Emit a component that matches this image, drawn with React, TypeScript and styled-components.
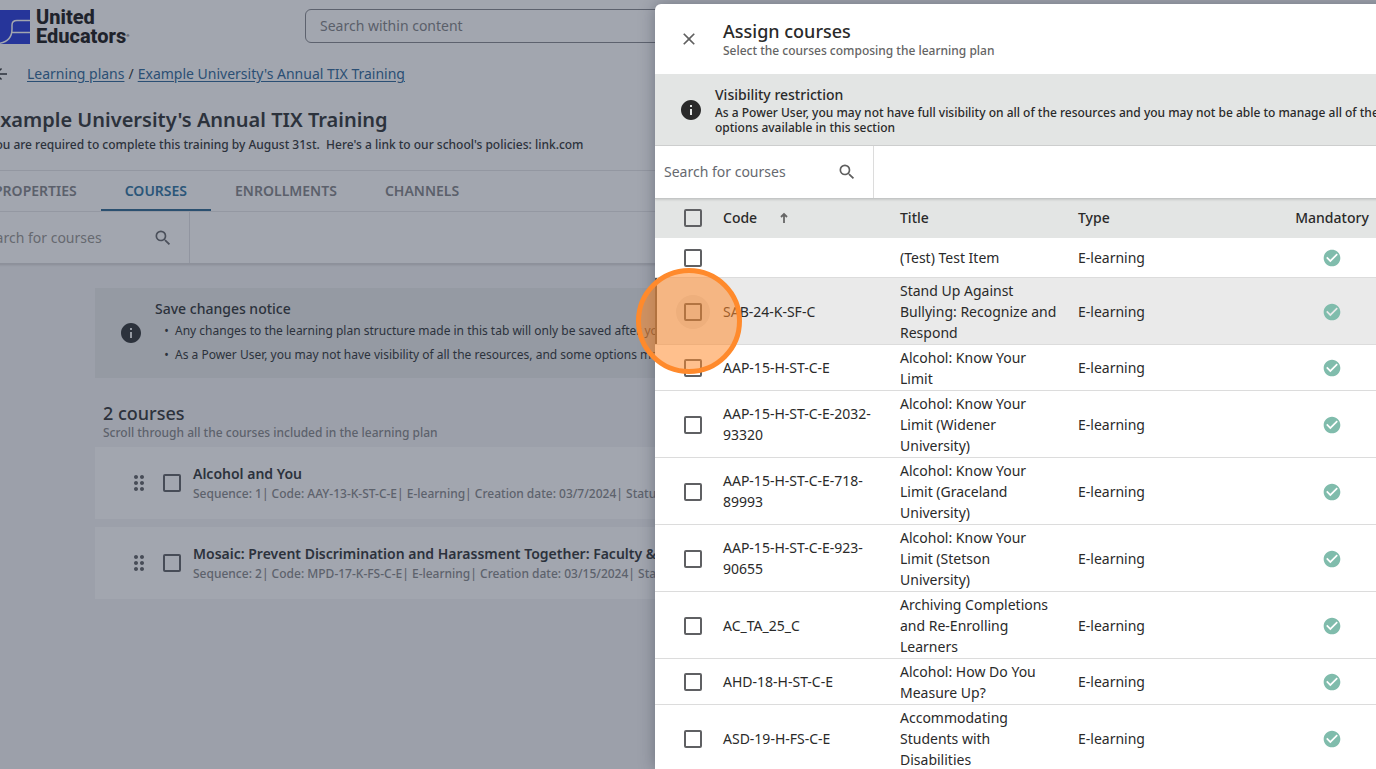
import React from "react";
import styled, { createGlobalStyle } from "styled-components";
import {
  MdSearch,
  MdInfo,
  MdClose,
  MdArrowBack,
  MdCheckCircle,
  MdDragIndicator,
} from "react-icons/md";

const Global = createGlobalStyle`
  * { box-sizing: border-box; }
  html, body, #root { height: 100%; }
  body {
    margin: 0;
    overflow: hidden;
    background: #9ca0aa;
    color: #333;
    font-family: "Noto Sans", "Open Sans", sans-serif;
    font-size: 14px;
    line-height: 21px;
  }
  h1, h2, h3, p, ul { margin: 0; padding: 0; }
  input, button { font: inherit; color: inherit; }
  button { background: none; border: 0; padding: 0; }
`;

const Stage = styled.div`
  position: relative;
  min-height: 100vh;
  overflow: hidden;
`;

const Shell = styled.div`
  margin-left: -28px;
  color: #2c323c;
`;

const Top = styled.header`
  background: #a2a6af;
`;

const Brandbar = styled.div`
  display: flex;
  align-items: center;
  height: 52px;
  padding-left: 18px;
`;

const Brand = styled.div`
  display: flex;
  align-items: center;
  gap: 6px;
  width: 315px;
  padding-top: 2px;
`;

const BrandName = styled.div`
  font-family: Roboto, sans-serif;
  font-weight: 800;
  font-size: 20px;
  line-height: 19px;
  color: #1f232c;
`;

const Mark = styled.span`
  font-size: 4px;
  line-height: 4px;
  vertical-align: 6px;
`;

const GlobalSearch = styled.input`
  flex: 1;
  height: 34px;
  padding: 0 14px 2px;
  border: 1px solid #5d626e;
  border-radius: 6px;
  background: transparent;
  &::placeholder { color: #5a5f6a; opacity: 1; }
`;

const Crumbs = styled.nav`
  display: flex;
  align-items: center;
  height: 43px;
  padding-left: 20px;
  gap: 4px;
`;

const BackButton = styled.button`
  display: flex;
  margin-right: 13px;
  font-size: 18px;
`;

const CrumbLink = styled.a`
  color: #2b4f74;
  text-underline-offset: 2px;
`;

const Heading = styled.div`
  height: 76px;
  padding: 11px 0 0 17px;
  border-bottom: 1px solid #9397a1;
`;

const PageTitle = styled.h1`
  font-size: 20px;
  line-height: 28px;
  font-weight: 600;
`;

const PageText = styled.p`
  font-size: 12px;
  line-height: 22px;
  font-weight: 500;
  white-space: pre;
`;

const Tabs = styled.div`
  display: flex;
  height: 41px;
  margin-left: -2px;
  border-bottom: 1px solid #969aa4;
`;

const Tab = styled.button<{ $active?: boolean }>`
  padding: 0 24px;
  font-weight: 600;
  color: ${(p) => (p.$active ? "#2b5679" : "#5b606b")};
  border-bottom: 2px solid ${(p) => (p.$active ? "#2b5070" : "transparent")};
`;

const SearchRow = styled.div<{ $dim?: boolean }>`
  display: flex;
  height: ${(p) => (p.$dim ? "52px" : "53px")};
  color: ${(p) => (p.$dim ? "#4b505b" : "#5f5f5f")};
  background: ${(p) => (p.$dim ? "transparent" : "#fff")};
  border-bottom: 1px solid ${(p) => (p.$dim ? "#8d919b" : "#c4c6c6")};
  box-shadow: 0 1px 2px rgba(0, 0, 0, 0.12);
  position: relative;
`;

const SearchBox = styled.label<{ $dim?: boolean }>`
  display: flex;
  align-items: center;
  width: ${(p) => (p.$dim ? "218px" : "219px")};
  padding: ${(p) => (p.$dim ? "0 16px 0 8px" : "0 16px 1px 9px")};
  border-right: 1px solid ${(p) => (p.$dim ? "#9195a0" : "#dcdcdc")};
  svg { font-size: 20px; flex: none; }
`;

const SearchInput = styled.input`
  flex: 1;
  min-width: 0;
  padding: 0;
  border: 0;
  background: transparent;
  outline: 0;
  &::placeholder { color: #66696f; opacity: 1; }
`;

const Body = styled.main`
  padding: 24px 0 0 123px;
`;

const Notice = styled.section`
  display: flex;
  align-items: center;
  gap: 12px;
  height: 90px;
  padding-left: 24px;
  background: #959aa3;
  > svg { font-size: 24px; flex: none; color: #2c323c; }
`;

const NoticeTitle = styled.h3`
  font-size: 14px;
  line-height: 20px;
  font-weight: 500;
`;

const Bullets = styled.ul`
  font-size: 12px;
  line-height: 24px;
  padding-left: 20px;
  white-space: nowrap;
  li::marker { content: "•\\a0\\a0"; }
`;

const ListHead = styled.div`
  padding: 23px 8px 7px;
`;

const ListTitle = styled.h2`
  font-size: 18px;
  line-height: 24px;
  font-weight: 500;
`;

const Muted = styled.p`
  font-size: 12px;
  line-height: 15px;
  font-weight: 500;
  color: #5d626c;
  white-space: nowrap;
`;

const Card = styled.article`
  display: flex;
  align-items: center;
  height: 72px;
  margin-bottom: 8px;
  padding-left: 32px;
  background: #a2a6af;
  color: #474c57;
  > svg { font-size: 24px; margin-right: 12px; flex: none; }
`;

const CardText = styled.div`
  margin-left: 12px;
  padding-top: 2px;
  color: #2c323c;
  white-space: nowrap;
`;

const CardTitle = styled.h3`
  font-size: 14px;
  line-height: 20px;
  font-weight: 600;
`;

const CardMeta = styled(Muted)`
  line-height: 20px;
`;

const Check = styled.input.attrs({ type: "checkbox" })<{ $ring?: boolean }>`
  appearance: none;
  display: block;
  position: relative;
  flex: none;
  width: 18px;
  height: 18px;
  margin: 0;
  border: 2px solid #5f6063;
  border-radius: 2px;
  ${Card} & { border-color: #474c57; }
  &::before {
    content: "";
    display: ${(p) => (p.$ring ? "block" : "none")};
    position: absolute;
    inset: -10px;
    border-radius: 50%;
    background: rgba(0, 0, 0, 0.07);
  }
`;

const Overlay = styled.div`
  position: absolute;
  inset: 0;
  display: flex;
  padding: 4px 0 0 655px;
`;

const Drawer = styled.div`
  flex: 1;
  margin-right: -24px;
  background: #fff;
  border-radius: 6px 0 0 0;
  box-shadow: 0 0 16px rgba(40, 45, 60, 0.4);
  color: #2a2a2a;
  overflow: hidden;
`;

const DrawerHead = styled.div`
  display: flex;
  align-items: center;
  height: 70px;
  gap: 24px;
  padding-left: 24px;
`;

const CloseButton = styled.button`
  display: flex;
  font-size: 20px;
  color: #606060;
`;

const DrawerTitle = styled.h2`
  font-size: 18px;
  line-height: 23px;
  font-weight: 500;
`;

const DrawerSub = styled(Muted)`
  color: #646464;
`;

const Restriction = styled.section`
  display: flex;
  align-items: center;
  gap: 12px;
  height: 72px;
  padding: 0 16px 0 24px;
  background: #e3e5e4;
  border-bottom: 1px solid #cfd0d0;
  > svg { font-size: 24px; flex: none; }
`;

const RestrictionText = styled.p`
  font-size: 12px;
  line-height: 15px;
  font-weight: 500;
`;

const Table = styled.table`
  width: 100%;
  table-layout: fixed;
  border-collapse: collapse;
`;

const Col = styled.col<{ $w?: number }>`
  width: ${(p) => (p.$w ? p.$w + "px" : "auto")};
`;

const Th = styled.th<{ $center?: boolean }>`
  height: 39px;
  padding: 0 0 2px;
  background: #e3e5e4;
  font-weight: 500;
  text-align: ${(p) => (p.$center ? "center" : "left")};
`;

const Sort = styled.span`
  display: inline-flex;
  align-items: center;
  gap: 21px;
`;

const Td = styled.td<{ $center?: boolean }>`
  height: 39px;
  padding: ${(p) => (p.$center ? "2px 0 0" : "2px 18px 1px 0")};
  text-align: ${(p) => (p.$center ? "center" : "left")};
  svg { display: block; margin: 0 auto; font-size: 20px; color: #80bcac; }
`;

const CheckTd = styled.td`
  padding: 2px 0 0 29px;
`;

const CheckWrap = styled.div`
  padding-left: 29px;
`;

const Row = styled.tr<{ $hover?: boolean }>`
  border-bottom: 1px solid #dcdcdc;
  background: ${(p) => (p.$hover ? "#eaeaea" : "#fff")};
  ${(p) => p.$hover && "box-shadow: inset 2px 0 0 #555;"}
`;

const Highlight = styled.div`
  position: absolute;
  left: 636px;
  top: 268px;
  width: 106px;
  height: 106px;
  border: 5px solid #ff8a2c;
  border-radius: 50%;
  background: rgba(255, 138, 44, 0.54);
  pointer-events: none;
`;

const rows: [string, string][] = [
  ["", "(Test) Test Item"],
  ["SAB-24-K-SF-C", "Stand Up Against Bullying: Recognize and Respond"],
  ["AAP-15-H-ST-C-E", "Alcohol: Know Your Limit"],
  ["AAP-15-H-ST-C-E-2032-93320", "Alcohol: Know Your Limit (Widener University)"],
  ["AAP-15-H-ST-C-E-718-89993", "Alcohol: Know Your Limit (Graceland University)"],
  ["AAP-15-H-ST-C-E-923-90655", "Alcohol: Know Your Limit (Stetson University)"],
  ["AC_TA_25_C", "Archiving Completions and Re-Enrolling Learners"],
  ["AHD-18-H-ST-C-E", "Alcohol: How Do You Measure Up?"],
  ["ASD-19-H-FS-C-E", "Accommodating Students with Disabilities"],
];

const courses = [
  {
    title: "Alcohol and You",
    meta: "Sequence: 1| Code: AAY-13-K-ST-C-E| E-learning| Creation date: 03/7/2024| Status: Published",
  },
  {
    title: "Mosaic: Prevent Discrimination and Harassment Together: Faculty & Staff",
    meta: "Sequence: 2| Code: MPD-17-K-FS-C-E| E-learning| Creation date: 03/15/2024| Status: Published",
  },
];

const Logo = () => (
  <svg width="40" height="34" viewBox="0 0 40 34" aria-hidden="true">
    <path d="M4 1Q5 0 12 0H40V34H0V1Z" fill="#26359a" />
    <path
      d="M40 10.500H27Q22 10.500 22 15V19Q22 32 8 33.500M40 22.500H22"
      fill="none"
      stroke="#a2a6af"
      strokeWidth="1.500"
    />
  </svg>
);

const SortArrow = () => (
  <svg width="12" height="12" viewBox="0 0 12 12" aria-hidden="true">
    <path d="M6 11V2M3 5L6 2L9 5" fill="none" stroke="#666" strokeWidth="1.800" />
  </svg>
);

export default function App() {
  return (
    <Stage>
      <Global />
      <Shell>
        <Top>
          <Brandbar>
            <Brand>
              <Logo />
              <BrandName>
                United
                <br />
                Educators<Mark>®</Mark>
              </BrandName>
            </Brand>
            <GlobalSearch aria-label="Search within content" placeholder="Search within content" />
          </Brandbar>
          <Crumbs>
            <BackButton aria-label="Back">
              <MdArrowBack />
            </BackButton>
            <CrumbLink href="#plans">Learning plans</CrumbLink>
            <span>/</span>
            <CrumbLink href="#plan">Example University's Annual TIX Training</CrumbLink>
          </Crumbs>
          <Heading>
            <PageTitle>Example University's Annual TIX Training</PageTitle>
            <PageText>
              {"You are required to complete this training by August 31st.  Here's a link to our school's policies: link.com"}
            </PageText>
          </Heading>
          <Tabs>
            <Tab>PROPERTIES</Tab>
            <Tab $active>COURSES</Tab>
            <Tab>ENROLLMENTS</Tab>
            <Tab>CHANNELS</Tab>
          </Tabs>
          <SearchRow $dim>
            <SearchBox $dim>
              <SearchInput aria-label="Search for courses" placeholder="Search for courses" />
              <MdSearch />
            </SearchBox>
          </SearchRow>
        </Top>
        <Body>
          <Notice>
            <MdInfo />
            <div>
              <NoticeTitle>Save changes notice</NoticeTitle>
              <Bullets>
                <li>Any changes to the learning plan structure made in this tab will only be saved after you save</li>
                <li>As a Power User, you may not have visibility of all the resources, and some options may be</li>
              </Bullets>
            </div>
          </Notice>
          <ListHead>
            <ListTitle>2 courses</ListTitle>
            <Muted>Scroll through all the courses included in the learning plan</Muted>
          </ListHead>
          {courses.map((c) => (
            <Card key={c.title}>
              <MdDragIndicator />
              <Check aria-label={c.title} />
              <CardText>
                <CardTitle>{c.title}</CardTitle>
                <CardMeta>{c.meta}</CardMeta>
              </CardText>
            </Card>
          ))}
        </Body>
      </Shell>
      <Overlay>
        <Drawer role="dialog" aria-label="Assign courses">
          <DrawerHead>
            <CloseButton aria-label="Close">
              <MdClose />
            </CloseButton>
            <div>
              <DrawerTitle>Assign courses</DrawerTitle>
              <DrawerSub>Select the courses composing the learning plan</DrawerSub>
            </div>
          </DrawerHead>
          <Restriction>
            <MdInfo />
            <div>
              <NoticeTitle>Visibility restriction</NoticeTitle>
              <RestrictionText>
                As a Power User, you may not have full visibility on all of the resources and you may not be able to
                manage all of the options available in this section
              </RestrictionText>
            </div>
          </Restriction>
          <SearchRow>
            <SearchBox>
              <SearchInput aria-label="Search for courses to assign" placeholder="Search for courses" />
              <MdSearch />
            </SearchBox>
          </SearchRow>
          <Table>
            <colgroup>
              <Col $w={68} />
              <Col $w={177} />
              <Col $w={178} />
              <Col />
              <Col $w={136} />
            </colgroup>
            <thead>
              <tr>
                <Th>
                  <CheckWrap>
                    <Check aria-label="Select all courses" />
                  </CheckWrap>
                </Th>
                <Th>
                  <Sort>
                    Code <SortArrow />
                  </Sort>
                </Th>
                <Th>Title</Th>
                <Th>Type</Th>
                <Th $center>Mandatory</Th>
              </tr>
            </thead>
            <tbody>
              {rows.map(([code, title]) => {
                const hovered = code === "SAB-24-K-SF-C";
                return (
                  <Row key={title} $hover={hovered}>
                    <CheckTd>
                      <Check aria-label={title} $ring={hovered} />
                    </CheckTd>
                    <Td>{code}</Td>
                    <Td>{title}</Td>
                    <Td>E-learning</Td>
                    <Td $center>
                      <MdCheckCircle />
                    </Td>
                  </Row>
                );
              })}
            </tbody>
          </Table>
        </Drawer>
      </Overlay>
      <Highlight />
    </Stage>
  );
}
